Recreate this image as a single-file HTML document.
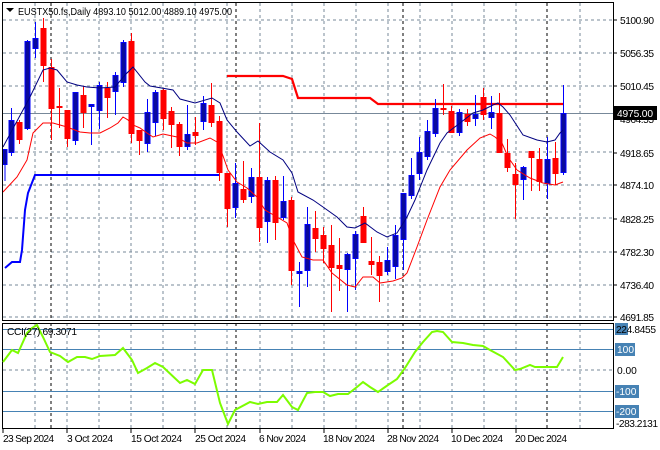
<!DOCTYPE html>
<html><head><meta charset="utf-8"><style>
html,body{margin:0;padding:0;background:#fff}
svg{display:block}
text{font-family:"Liberation Sans","DejaVu Sans",sans-serif;font-size:10.2px;fill:#000}
.g{stroke:#778899;stroke-width:1;stroke-dasharray:3,3;fill:none}
.k{stroke:#000;stroke-width:1;stroke-dasharray:3,3;fill:none}
.bw{stroke:#0000ff;stroke-width:1}
.rw{stroke:#ff0000;stroke-width:1}
.bb{fill:#0a0a9c;stroke:#0000ff;stroke-width:1}
.rb{fill:#ff0000;stroke:#ff0000;stroke-width:1}
</style></head><body>
<svg width="660" height="450" viewBox="0 0 660 450" xmlns="http://www.w3.org/2000/svg">
<rect width="660" height="450" fill="#fff"/>
<g class="g">
<path d="M3 20H613M3 53H613M3 86H613M3 152H613M3 185H613M3 218H613M3 252H613M3 285H613M3 317H613"/>
<path d="M35 3V321M67 3V321M99 3V321M131 3V321M163 3V321M195 3V321M227 3V321M260 3V321M292 3V321M324 3V321M356 3V321M388 3V321M420 3V321M452 3V321M484 3V321M516 3V321M580 3V321"/>
<path d="M35 323V429M67 323V429M99 323V429M131 323V429M163 323V429M195 323V429M227 323V429M260 323V429M292 323V429M324 323V429M356 323V429M388 323V429M420 323V429M452 323V429M484 323V429M516 323V429M580 323V429"/>
<path d="M3 370H613"/>
</g>
<g class="k"><path d="M51 3V321M236 3V321M403 3V321M547 3V321M51 323V429M236 323V429M403 323V429M547 323V429"/></g>
<path d="M3 113.5H613" stroke="#778899" stroke-width="1"/>
<polyline points="5,268 12,262 20,262 22,250 25,210 28,193 35,175 219,175" fill="none" stroke="#0000ff" stroke-width="2"/>
<polyline points="227,76 283,76 292,79 298,98 310,98 370,98 378,104 563,104" fill="none" stroke="#ff0000" stroke-width="2.2"/>
<g id="c">
<line class="bw" x1="5" y1="149" x2="5" y2="181"/><rect class="bb" x="3" y="149.5" width="4" height="15"/>
<line class="bw" x1="11.5" y1="108" x2="11.5" y2="156"/><rect class="bb" x="9" y="120.5" width="5" height="32"/>
<line class="rw" x1="19.5" y1="120" x2="19.5" y2="144"/><rect class="rb" x="17" y="122.5" width="5" height="17"/>
<line class="bw" x1="27.5" y1="40" x2="27.5" y2="130"/><rect class="bb" x="25" y="41.5" width="5" height="87"/>
<line class="bw" x1="35.5" y1="22" x2="35.5" y2="58"/><rect class="bb" x="33" y="38.5" width="5" height="10"/>
<line class="rw" x1="43.5" y1="18" x2="43.5" y2="82"/><rect class="rb" x="41" y="28.5" width="5" height="37"/>
<line class="rw" x1="51.5" y1="59" x2="51.5" y2="140"/><rect class="rb" x="49" y="67.5" width="5" height="41"/>
<line class="rw" x1="59.5" y1="88" x2="59.5" y2="128"/><rect class="rb" x="57" y="106.5" width="5" height="1"/>
<line class="rw" x1="67.5" y1="110" x2="67.5" y2="147"/><rect class="rb" x="65" y="110.5" width="5" height="28"/>
<line class="bw" x1="75.5" y1="92" x2="75.5" y2="145"/><rect class="bb" x="73" y="92.5" width="5" height="48"/>
<line class="rw" x1="83.5" y1="86" x2="83.5" y2="128"/><rect class="rb" x="81" y="95.5" width="5" height="17"/>
<line class="bw" x1="91.5" y1="104" x2="91.5" y2="145"/><rect class="bb" x="89" y="104.5" width="5" height="2"/>
<line class="bw" x1="99.5" y1="82" x2="99.5" y2="129"/><rect class="bb" x="97" y="85.5" width="5" height="25"/>
<line class="rw" x1="107.5" y1="82" x2="107.5" y2="118"/><rect class="rb" x="105" y="88.5" width="5" height="9"/>
<line class="bw" x1="115.5" y1="72" x2="115.5" y2="115"/><rect class="bb" x="113" y="75.5" width="5" height="16"/>
<line class="bw" x1="123.5" y1="40" x2="123.5" y2="87"/><rect class="bb" x="121" y="42.5" width="5" height="40"/>
<line class="rw" x1="131.5" y1="33" x2="131.5" y2="143"/><rect class="rb" x="129" y="41.5" width="5" height="92"/>
<line class="rw" x1="139.5" y1="130" x2="139.5" y2="155"/><rect class="rb" x="137" y="130.5" width="5" height="10"/>
<line class="bw" x1="147.5" y1="99" x2="147.5" y2="152"/><rect class="bb" x="145" y="112.5" width="5" height="31"/>
<line class="bw" x1="155.5" y1="90" x2="155.5" y2="136"/><rect class="bb" x="153" y="92.5" width="5" height="30"/>
<line class="rw" x1="163.5" y1="89" x2="163.5" y2="130"/><rect class="rb" x="161" y="90.5" width="5" height="28"/>
<line class="rw" x1="171.5" y1="107" x2="171.5" y2="148"/><rect class="rb" x="169" y="111.5" width="5" height="13"/>
<line class="rw" x1="179.5" y1="122" x2="179.5" y2="156"/><rect class="rb" x="177" y="124.5" width="5" height="22"/>
<line class="bw" x1="187.5" y1="105" x2="187.5" y2="150"/><rect class="bb" x="185" y="134.5" width="5" height="12"/>
<line class="rw" x1="195.5" y1="117" x2="195.5" y2="145"/><rect class="rb" x="193" y="132.5" width="5" height="3"/>
<line class="bw" x1="203.5" y1="96" x2="203.5" y2="130"/><rect class="bb" x="201" y="103.5" width="5" height="18"/>
<line class="rw" x1="211.5" y1="83" x2="211.5" y2="127"/><rect class="rb" x="209" y="105.5" width="5" height="17"/>
<line class="rw" x1="219.5" y1="116" x2="219.5" y2="181"/><rect class="rb" x="217" y="121.5" width="5" height="51"/>
<line class="rw" x1="227.5" y1="173" x2="227.5" y2="227"/><rect class="rb" x="225" y="173.5" width="5" height="35"/>
<line class="bw" x1="235.5" y1="163" x2="235.5" y2="218"/><rect class="bb" x="233" y="183.5" width="5" height="24"/>
<line class="rw" x1="243.5" y1="161" x2="243.5" y2="203"/><rect class="rb" x="241" y="189.5" width="5" height="10"/>
<line class="bw" x1="251.5" y1="168" x2="251.5" y2="203"/><rect class="bb" x="249" y="177.5" width="5" height="19"/>
<line class="rw" x1="259.5" y1="123" x2="259.5" y2="242"/><rect class="rb" x="257" y="177.5" width="5" height="50"/>
<line class="bw" x1="267.5" y1="177" x2="267.5" y2="243"/><rect class="bb" x="265" y="180.5" width="5" height="41"/>
<line class="rw" x1="275.5" y1="176" x2="275.5" y2="240"/><rect class="rb" x="273" y="180.5" width="5" height="42"/>
<line class="bw" x1="283.5" y1="176" x2="283.5" y2="220"/><rect class="bb" x="281" y="201.5" width="5" height="16"/>
<line class="rw" x1="291.5" y1="197" x2="291.5" y2="285"/><rect class="rb" x="289" y="200.5" width="5" height="70"/>
<line class="bw" x1="299.5" y1="262" x2="299.5" y2="307"/><rect class="bb" x="297" y="271.5" width="5" height="2"/>
<line class="bw" x1="307.5" y1="207" x2="307.5" y2="287"/><rect class="bb" x="305" y="224.5" width="5" height="46"/>
<line class="rw" x1="315.5" y1="211" x2="315.5" y2="252"/><rect class="rb" x="313" y="228.5" width="5" height="10"/>
<line class="rw" x1="323.5" y1="227" x2="323.5" y2="263"/><rect class="rb" x="321" y="235.5" width="5" height="13"/>
<line class="rw" x1="331.5" y1="225" x2="331.5" y2="312"/><rect class="rb" x="329" y="245.5" width="5" height="22"/>
<line class="rw" x1="339.5" y1="238" x2="339.5" y2="291"/><rect class="rb" x="337" y="265.5" width="5" height="3"/>
<line class="bw" x1="347.5" y1="253" x2="347.5" y2="312"/><rect class="bb" x="345" y="254.5" width="5" height="15"/>
<line class="bw" x1="355.5" y1="231" x2="355.5" y2="290"/><rect class="bb" x="353" y="234.5" width="5" height="24"/>
<line class="rw" x1="363.5" y1="207" x2="363.5" y2="242"/><rect class="rb" x="361" y="216.5" width="5" height="26"/>
<line class="rw" x1="371.5" y1="237" x2="371.5" y2="275"/><rect class="rb" x="369" y="261.5" width="5" height="3"/>
<line class="rw" x1="379.5" y1="256" x2="379.5" y2="302"/><rect class="rb" x="377" y="262.5" width="5" height="13"/>
<line class="bw" x1="387.5" y1="247" x2="387.5" y2="275"/><rect class="bb" x="385" y="260.5" width="5" height="11"/>
<line class="bw" x1="395.5" y1="225" x2="395.5" y2="279"/><rect class="bb" x="393" y="235.5" width="5" height="31"/>
<line class="bw" x1="403.5" y1="193" x2="403.5" y2="270"/><rect class="bb" x="401" y="193.5" width="5" height="46"/>
<line class="bw" x1="411.5" y1="158" x2="411.5" y2="199"/><rect class="bb" x="409" y="175.5" width="5" height="20"/>
<line class="bw" x1="419.5" y1="137" x2="419.5" y2="180"/><rect class="bb" x="417" y="152.5" width="5" height="21"/>
<line class="bw" x1="427.5" y1="120" x2="427.5" y2="160"/><rect class="bb" x="425" y="131.5" width="5" height="25"/>
<line class="bw" x1="435.5" y1="99" x2="435.5" y2="137"/><rect class="bb" x="433" y="108.5" width="5" height="25"/>
<line class="rw" x1="443.5" y1="84" x2="443.5" y2="115"/><rect class="rb" x="441" y="108.5" width="5" height="1"/>
<line class="rw" x1="451.5" y1="106" x2="451.5" y2="133"/><rect class="rb" x="449" y="111.5" width="5" height="21"/>
<line class="bw" x1="459.5" y1="109" x2="459.5" y2="136"/><rect class="bb" x="457" y="112.5" width="5" height="20"/>
<line class="rw" x1="467.5" y1="109" x2="467.5" y2="126"/><rect class="rb" x="465" y="114.5" width="5" height="7"/>
<line class="bw" x1="475.5" y1="95" x2="475.5" y2="126"/><rect class="bb" x="473" y="114.5" width="5" height="4"/>
<line class="rw" x1="483.5" y1="88" x2="483.5" y2="120"/><rect class="rb" x="481" y="97.5" width="5" height="17"/>
<line class="bw" x1="491.5" y1="96" x2="491.5" y2="129"/><rect class="bb" x="489" y="112.5" width="5" height="5"/>
<line class="rw" x1="499.5" y1="93" x2="499.5" y2="152"/><rect class="rb" x="497" y="113.5" width="5" height="39"/>
<line class="rw" x1="507.5" y1="139" x2="507.5" y2="172"/><rect class="rb" x="505" y="153.5" width="5" height="14"/>
<line class="rw" x1="515.5" y1="163" x2="515.5" y2="219"/><rect class="rb" x="513" y="174.5" width="5" height="10"/>
<line class="bw" x1="523.5" y1="166" x2="523.5" y2="200"/><rect class="bb" x="521" y="167.5" width="5" height="12"/>
<line class="rw" x1="531.5" y1="151" x2="531.5" y2="191"/><rect class="rb" x="529" y="151.5" width="5" height="6"/>
<line class="rw" x1="539.5" y1="148" x2="539.5" y2="191"/><rect class="rb" x="537" y="159.5" width="5" height="22"/>
<line class="bw" x1="547.5" y1="137" x2="547.5" y2="199"/><rect class="bb" x="545" y="159.5" width="5" height="24"/>
<line class="rw" x1="555.5" y1="142" x2="555.5" y2="185"/><rect class="rb" x="553" y="158.5" width="5" height="15"/>
<line class="bw" x1="563.5" y1="85" x2="563.5" y2="175"/><rect class="bb" x="561" y="113.5" width="5" height="59"/>
</g>
<polyline fill="none" stroke="#000080" stroke-width="1" points="3,147 30,97 43,70 50,68 57,70 67,82 77,85 87,87 100,88 115,87 125,75 133,67 145,82 150,86 173,90 180,99 195,103 212,98 220,103 227,120 237,132 250,146 258,141 270,152 283,160 292,173 298,192 313,200 323,207 337,217 347,227 355,228 365,223 377,232 387,237 397,233 407,217 415,200 427,170 440,143 447,133 460,123 473,113 483,110 493,105 498,103 503,107 510,115 523,135 537,140 547,142 555,140 560,133 563,130"/>
<polyline fill="none" stroke="#ff0000" stroke-width="1" points="3,192 17,177 27,160 33,133 43,123 53,123 67,127 80,132 90,133 100,133 110,128 118,123 123,117 128,120 133,125 140,128 147,133 153,137 163,134 177,137 187,143 197,143 210,138 217,142 222,153 228,170 237,182 247,188 257,197 265,210 277,217 287,223 293,240 302,257 313,260 323,260 332,273 347,285 355,287 363,277 373,277 380,283 393,281 402,278 407,273 417,247 427,220 440,187 450,170 467,150 480,138 490,134 495,137 502,143 508,157 517,170 530,178 543,183 555,185 563,182"/>
<rect x="2.5" y="2.5" width="611" height="318" fill="none" stroke="#000" stroke-width="1"/>
<rect x="2.5" y="323.5" width="611" height="105" fill="none" stroke="#000" stroke-width="1"/>
<path d="M6 8L14 8L10 12Z" fill="#000"/>
<text x="18" y="15" textLength="214" lengthAdjust="spacingAndGlyphs">EUSTX50.fs,Daily  4893.10 5012.00 4889.10 4975.00</text>
<g>
<text x="620" y="24" textLength="34">5100.90</text>
<text x="620" y="57" textLength="34">5056.35</text>
<text x="620" y="90" textLength="34">5010.45</text>
<text x="620" y="123" textLength="34">4964.55</text>
<text x="620" y="157" textLength="34">4918.65</text>
<text x="620" y="189" textLength="34">4874.10</text>
<text x="620" y="223" textLength="34">4828.25</text>
<text x="620" y="256" textLength="34">4782.30</text>
<text x="620" y="289" textLength="34">4736.40</text>
<text x="620" y="321" textLength="34">4691.85</text>
<path d="M613 20H617M613 53H617M613 86H617M613 119H617M613 153H617M613 185H617M613 219H617M613 252H617M613 285H617M613 317H617" stroke="#000"/>
<rect x="614" y="106" width="43" height="14" fill="#000"/>
<text x="617" y="117" textLength="36" style="fill:#fff">4975.00</text>
</g>
<g stroke="#4682b4" stroke-width="1">
<path d="M3 329.5H613M3 349.5H613M3 391.5H613M3 411.5H613"/>
</g>
<polyline fill="none" stroke="#7cfc00" stroke-width="2" points="3,362 12,350 18,353 27,333 32,328 37,325 43,337 50,352 60,356 68,362 77,357 85,357 92,359 100,356 115,355 123,348 132,360 138,373 147,368 155,363 163,367 180,383 187,380 195,384 203,370 212,370 220,403 228,424 235,410 250,402 258,404 267,402 277,402 283,395 292,407 298,410 307,393 315,392 323,392 330,396 338,394 348,394 357,387 363,382 370,387 378,392 388,385 397,379 405,368 415,352 423,342 432,332 437,331 443,332 452,342 463,343 473,345 483,346 490,350 503,357 515,370 520,369 530,365 535,367 557,367 563,357"/>
<text x="7" y="335" textLength="70">CCI(27) 69.3071</text>
<rect x="615" y="323" width="13" height="12" fill="#4682b4"/>
<text x="616" y="333" textLength="40">224.8455</text>
<rect x="615" y="343" width="20" height="13" fill="#4682b4"/>
<text x="617" y="353" style="fill:#fff">100</text>
<text x="617" y="374">0.00</text>
<rect x="615" y="385" width="24" height="13" fill="#4682b4"/>
<text x="616" y="395" style="fill:#fff">-100</text>
<rect x="615" y="405" width="24" height="13" fill="#4682b4"/>
<text x="616" y="415" style="fill:#fff">-200</text>
<text x="616" y="427" textLength="42">-283.2131</text>
<path d="M3 429V433M67 429V433M131 429V433M195 429V433M260 429V433M324 429V433M388 429V433M452 429V433M516 429V433" stroke="#000"/>
<text x="3" y="442" textLength="51">23 Sep 2024</text>
<text x="67" y="442" textLength="46">3 Oct 2024</text>
<text x="131" y="442" textLength="51">15 Oct 2024</text>
<text x="195" y="442" textLength="51">25 Oct 2024</text>
<text x="259" y="442" textLength="47">6 Nov 2024</text>
<text x="323" y="442" textLength="52">18 Nov 2024</text>
<text x="387" y="442" textLength="52">28 Nov 2024</text>
<text x="451" y="442" textLength="52">10 Dec 2024</text>
<text x="515" y="442" textLength="52">20 Dec 2024</text>
</svg>
</body></html>
